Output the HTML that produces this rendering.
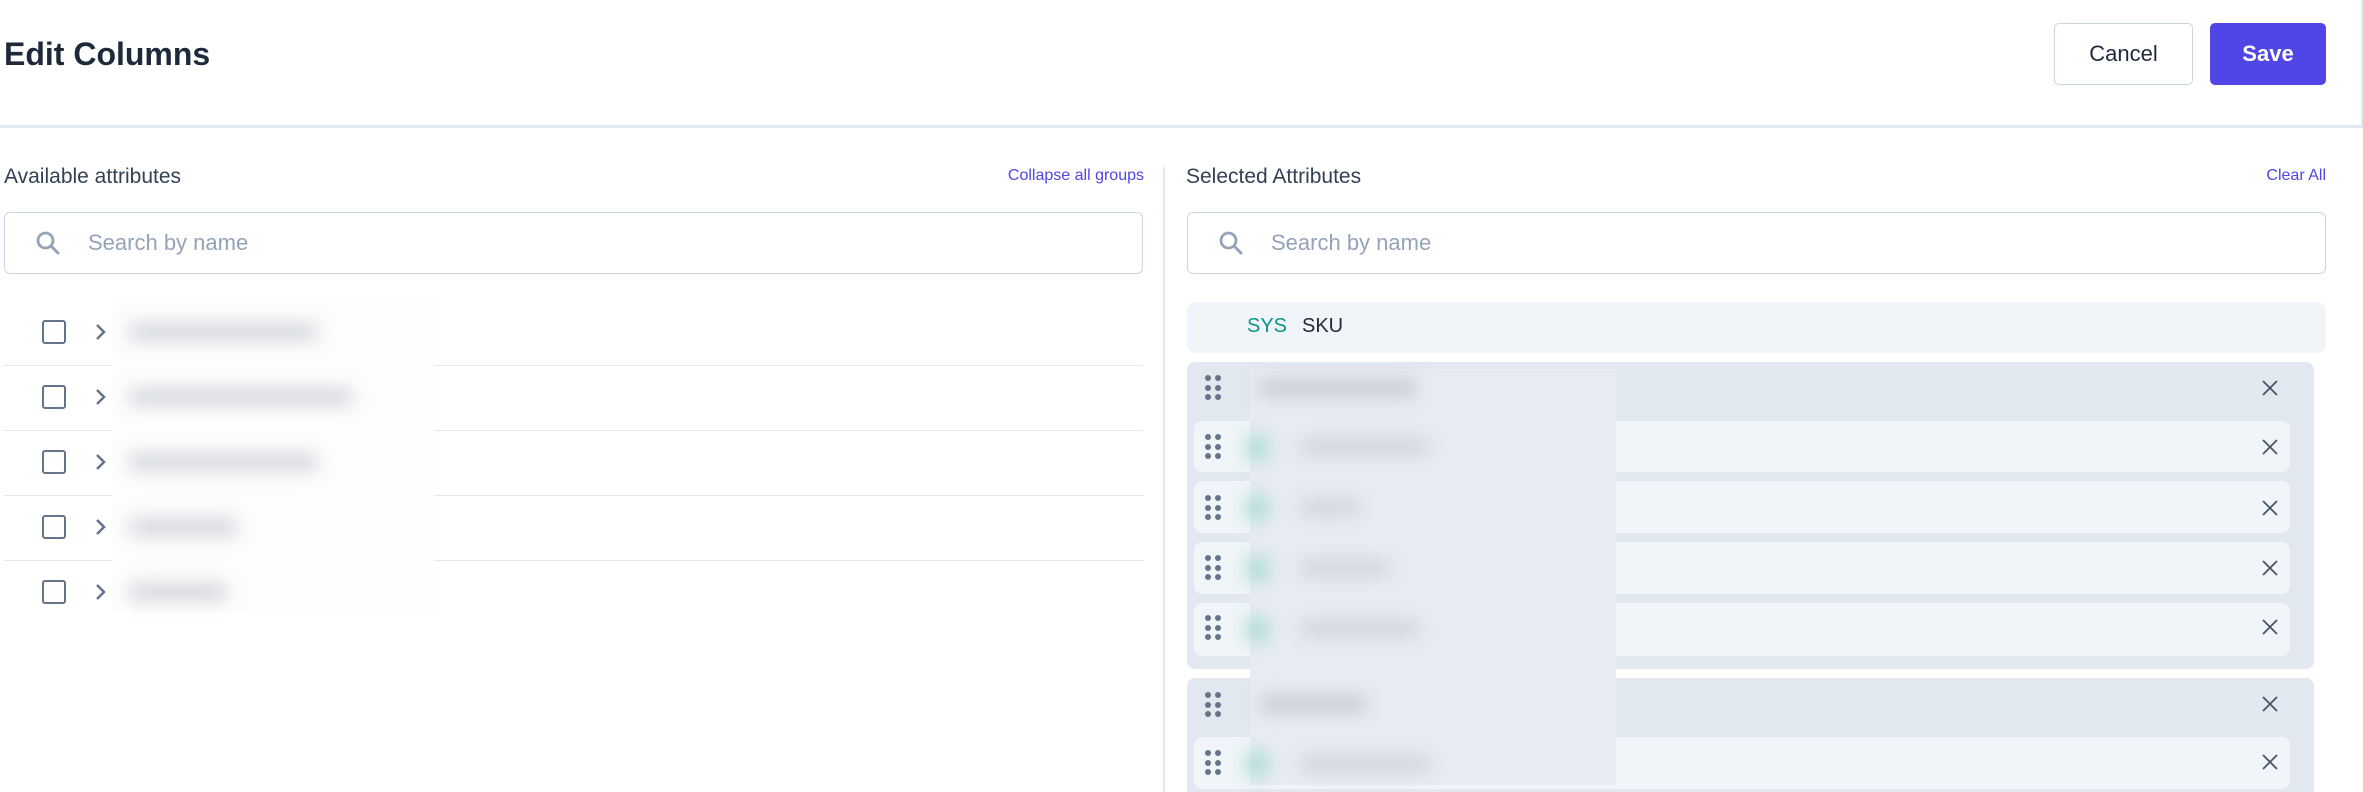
<!DOCTYPE html>
<html><head><meta charset="utf-8"><style>
*{box-sizing:border-box;margin:0;padding:0}
html,body{width:2363px;height:792px;overflow:hidden}
body{background:#fff;font-family:"Liberation Sans",Arial,sans-serif;position:relative;color:#1e293b}
.a{position:absolute}
.title{left:4px;top:32px;font-size:32px;font-weight:bold;color:#1e293b;line-height:44px}
.hdr{left:0;top:125px;width:2363px;height:3px;background:#e2e8f0}
.btn{top:23px;height:62px;border-radius:5px;font-size:22px;display:flex;align-items:center;justify-content:center}
.lbl{font-size:21px;color:#334155;top:164px;line-height:26px}
.link{font-size:16px;color:#4f46e5;top:166px;line-height:20px}
.search{top:212px;height:62px;border:1.5px solid #cbd5e1;border-radius:6px;background:#fff}
.search span{position:absolute;left:83px;top:17px;font-size:22px;color:#94a3b8}
.search svg{position:absolute;left:30px;top:17px}
.cb{left:42px;width:24px;height:24px;border:2.5px solid #64748b;border-radius:3px}
.chev{left:92px}
.div{left:4px;width:1139px;height:1px;background:#e2e8f0}
.blur{filter:blur(9px);background:#cfd3da;height:16px;border-radius:8px}
.grp{left:1187px;width:1127px;background:#e2e8f0;border-radius:8px}
.row{left:1194px;width:1096px;background:#f1f5f9;border-radius:8px}
.x{left:2261px}
</style></head><body>
<div class="a title">Edit Columns</div>
<div class="a btn" style="left:2054px;width:139px;border:1.5px solid #cbd5e1;color:#1e293b;background:#fff">Cancel</div>
<div class="a btn" style="left:2210px;width:116px;background:#4f46e5;color:#fff;font-weight:bold">Save</div>
<div class="a hdr"></div>
<div class="a" style="left:2361px;top:0;width:2px;height:125px;background:#e2e8f0"></div>

<div class="a lbl" style="left:4px">Available attributes</div>
<div class="a link" style="left:0;width:1144px;text-align:right">Collapse all groups</div>
<div class="a search" style="left:4px;width:1139px">
<svg width="26" height="26" viewBox="0 0 26 26"><circle cx="10.5" cy="10.5" r="7.5" fill="none" stroke="#94a3b8" stroke-width="2.8"/><path d="M16 16l7 7" stroke="#94a3b8" stroke-width="3" stroke-linecap="round"/></svg>
<span>Search by name</span></div>

<div class="a" style="left:1163px;top:167px;width:2px;height:625px;background:#e2e8f0"></div>

<div class="a cb" style="top:320px"></div><div class="a cb" style="top:385px"></div><div class="a cb" style="top:450px"></div><div class="a cb" style="top:515px"></div><div class="a cb" style="top:580px"></div>
<svg class="a chev" style="top:322px" width="16" height="20"><path d="M5 3l7 7-7 7" fill="none" stroke="#64748b" stroke-width="2.5"/></svg>
<svg class="a chev" style="top:387px" width="16" height="20"><path d="M5 3l7 7-7 7" fill="none" stroke="#64748b" stroke-width="2.5"/></svg>
<svg class="a chev" style="top:452px" width="16" height="20"><path d="M5 3l7 7-7 7" fill="none" stroke="#64748b" stroke-width="2.5"/></svg>
<svg class="a chev" style="top:517px" width="16" height="20"><path d="M5 3l7 7-7 7" fill="none" stroke="#64748b" stroke-width="2.5"/></svg>
<svg class="a chev" style="top:582px" width="16" height="20"><path d="M5 3l7 7-7 7" fill="none" stroke="#64748b" stroke-width="2.5"/></svg>
<div class="a div" style="top:365px"></div><div class="a div" style="top:430px"></div><div class="a div" style="top:495px"></div><div class="a div" style="top:560px"></div>
<div class="a" style="left:112px;top:298px;width:322px;height:314px;background:#fdfdfd"></div>
<div class="a blur" style="left:128px;top:324px;width:190px"></div>
<div class="a blur" style="left:128px;top:389px;width:225px"></div>
<div class="a blur" style="left:128px;top:454px;width:190px"></div>
<div class="a blur" style="left:128px;top:519px;width:110px"></div>
<div class="a blur" style="left:128px;top:584px;width:100px"></div>

<div class="a lbl" style="left:1186px">Selected Attributes</div>
<div class="a link" style="left:1187px;width:1139px;text-align:right">Clear All</div>
<div class="a search" style="left:1187px;width:1139px">
<svg width="26" height="26" viewBox="0 0 26 26"><circle cx="10.5" cy="10.5" r="7.5" fill="none" stroke="#94a3b8" stroke-width="2.8"/><path d="M16 16l7 7" stroke="#94a3b8" stroke-width="3" stroke-linecap="round"/></svg>
<span>Search by name</span></div>
<div class="a" style="left:1187px;top:302px;width:1139px;height:51px;background:#f1f5f9;border-radius:8px"></div>
<div class="a" style="left:1247px;top:315px;font-size:20px;color:#0d9488">SYS</div>
<div class="a" style="left:1302px;top:315px;font-size:20px;color:#1e293b">SKU</div>

<div class="a grp" style="top:362px;height:307px"></div>
<div class="a grp" style="top:678px;height:130px"></div>
<div class="a row" style="top:421px;height:51px"></div>
<div class="a row" style="top:481px;height:52px"></div>
<div class="a row" style="top:542px;height:52px"></div>
<div class="a row" style="top:603px;height:53px"></div>
<div class="a row" style="top:737px;height:52px"></div>

<svg class="a" style="left:1200px;top:372px" width="30" height="420">
<g fill="#64748b">
<g id="d"><circle cx="8" cy="6" r="3"/><circle cx="18" cy="6" r="3"/><circle cx="8" cy="16" r="3"/><circle cx="18" cy="16" r="3"/><circle cx="8" cy="25" r="3"/><circle cx="18" cy="25" r="3"/></g>
<use href="#d" y="59"/><use href="#d" y="120"/><use href="#d" y="180"/><use href="#d" y="240"/><use href="#d" y="317"/><use href="#d" y="375"/>
</g></svg>
<svg class="a x" style="top:379px" width="18" height="420"><g stroke="#475569" stroke-width="1.8" fill="none">
<path d="M2 2l14 14M16 2L2 16"/>
<path d="M2 61l14 14M16 61L2 75"/>
<path d="M2 122l14 14M16 122L2 136"/>
<path d="M2 182l14 14M16 182L2 196"/>
<path d="M2 241l14 14M16 241L2 255"/>
<path d="M2 318l14 14M16 318L2 332"/>
<path d="M2 376l14 14M16 376L2 390"/>
</g></svg>

<div class="a" style="left:1250px;top:369px;width:366px;height:416px;background:#e8ecf2"></div>
<div class="a blur" style="left:1258px;top:380px;width:160px;background:#c4cad4"></div>
<div class="a blur" style="left:1300px;top:439px;width:130px"></div>
<div class="a blur" style="left:1300px;top:499px;width:60px"></div>
<div class="a blur" style="left:1300px;top:560px;width:90px"></div>
<div class="a blur" style="left:1300px;top:621px;width:120px"></div>
<div class="a blur" style="left:1258px;top:696px;width:110px;background:#c4cad4"></div>
<div class="a blur" style="left:1300px;top:756px;width:130px"></div>
<div class="a blur" style="left:1246px;top:435px;width:22px;height:26px;background:#a8dcd0"></div>
<div class="a blur" style="left:1246px;top:495px;width:22px;height:26px;background:#a8dcd0"></div>
<div class="a blur" style="left:1246px;top:556px;width:22px;height:26px;background:#a8dcd0"></div>
<div class="a blur" style="left:1246px;top:617px;width:22px;height:26px;background:#a8dcd0"></div>
<div class="a blur" style="left:1246px;top:751px;width:22px;height:26px;background:#a8dcd0"></div>
</body></html>
